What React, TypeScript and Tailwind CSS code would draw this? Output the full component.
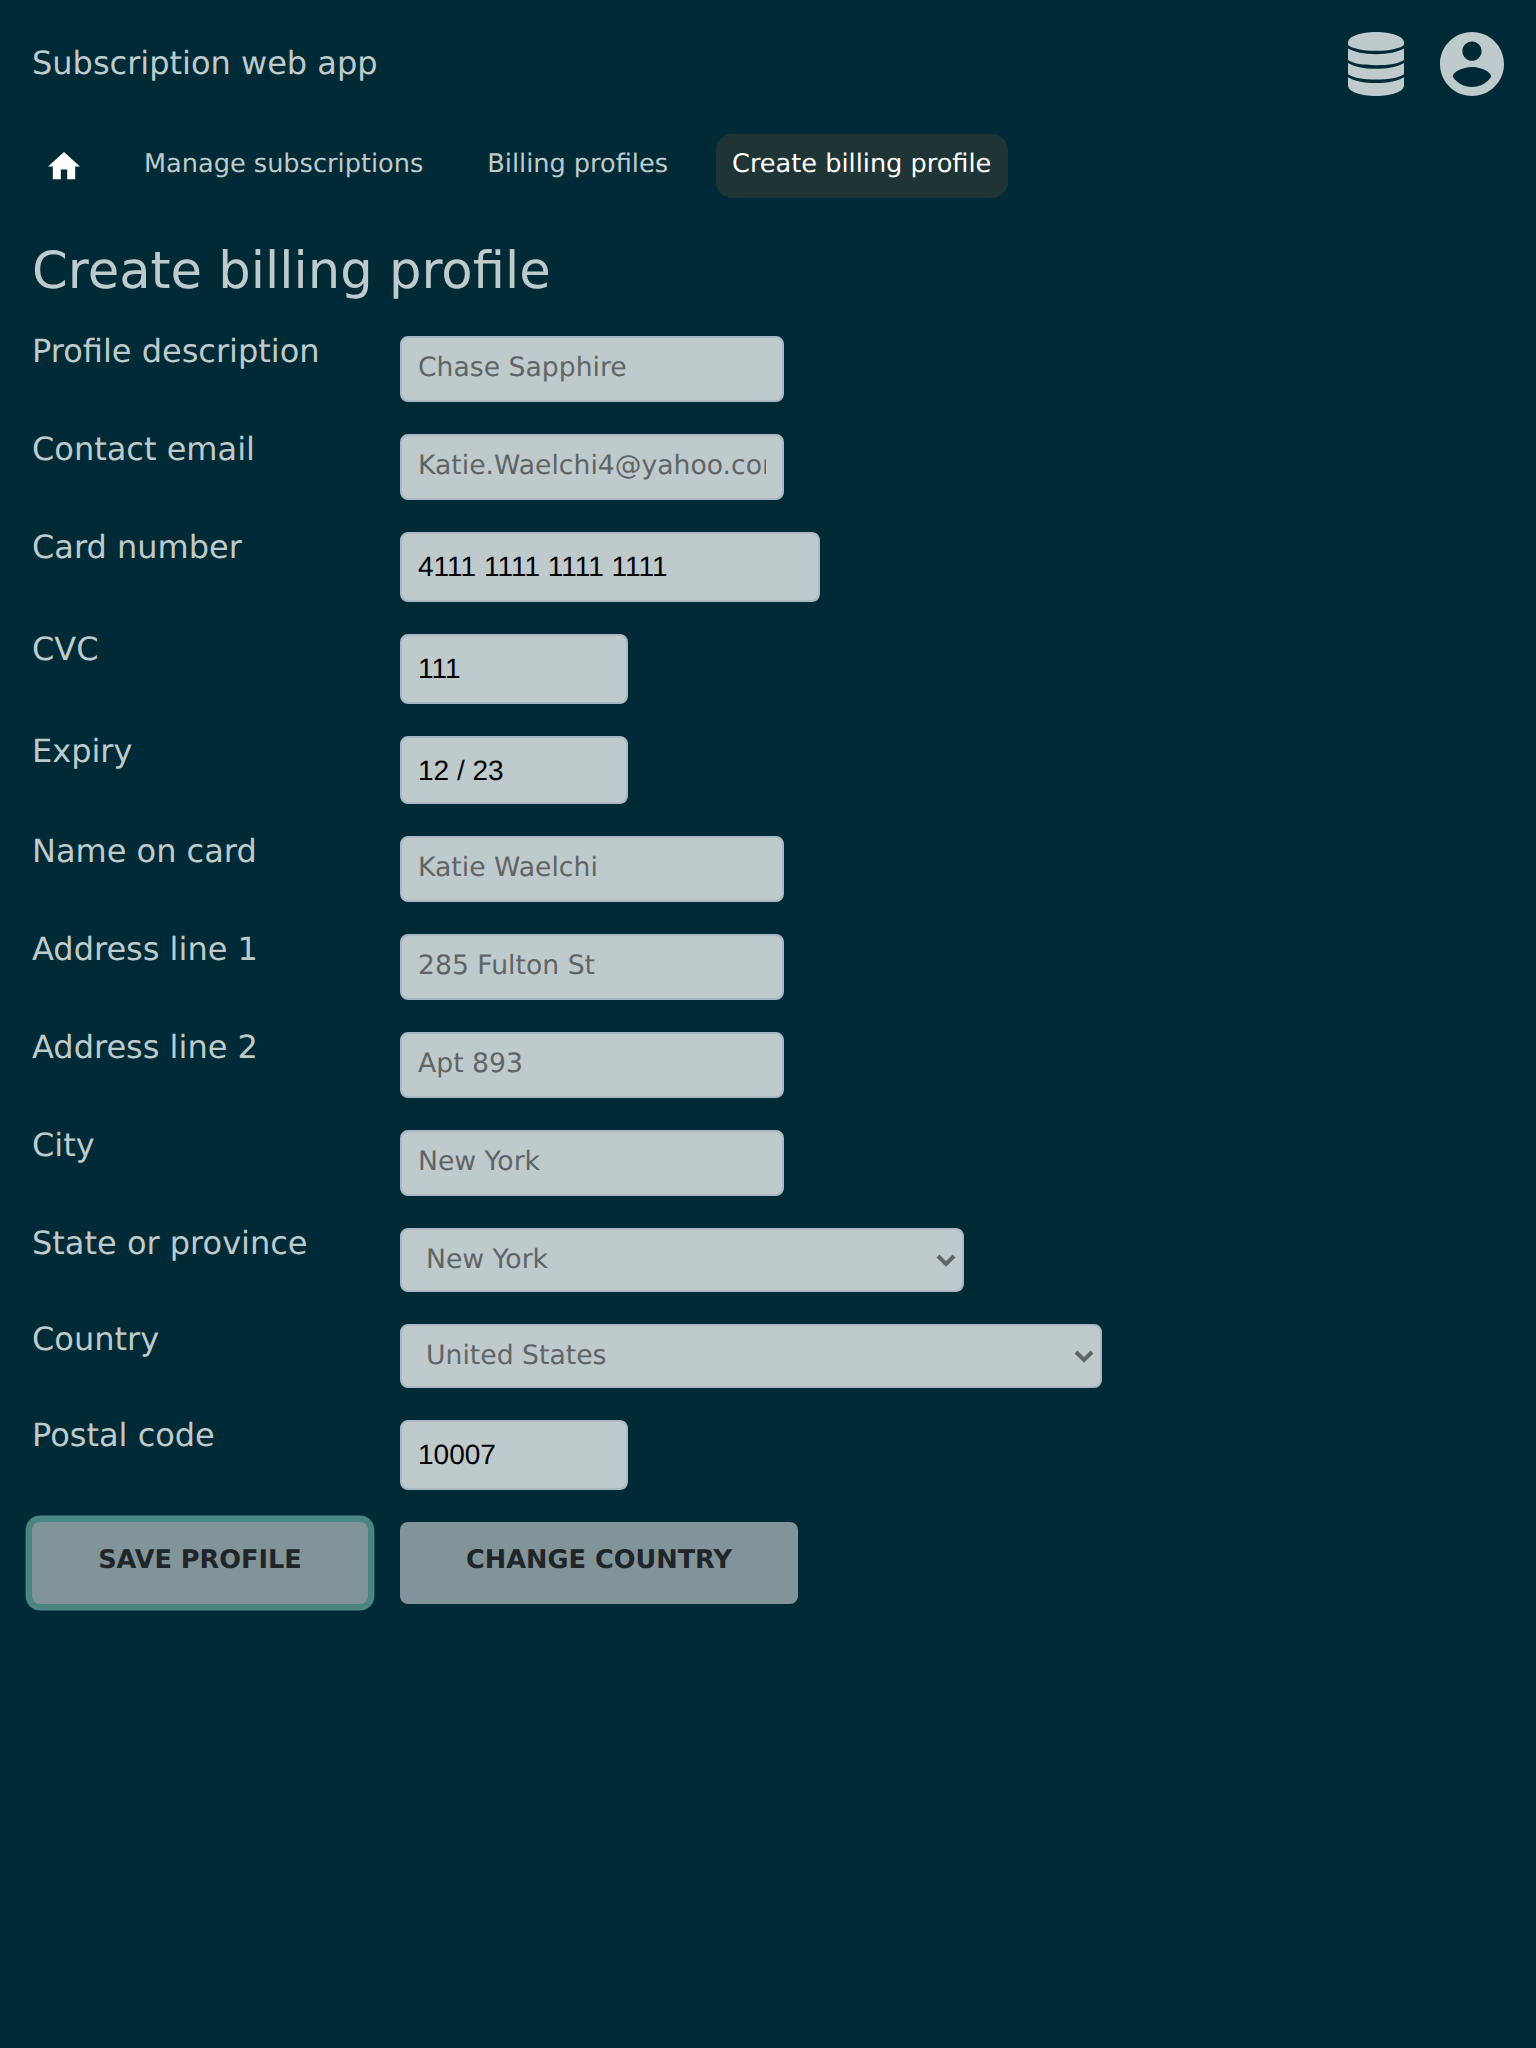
type Field = {
  label: string;
  value: string;
  kind: "placeholder" | "value" | "select";
  size: string;
};

const fields: Field[] = [
  { label: "Profile description", value: "Chase Sapphire", kind: "placeholder", size: "h-[66px] w-96" },
  { label: "Contact email", value: "Katie.Waelchi4@yahoo.com", kind: "placeholder", size: "h-[66px] w-96" },
  { label: "Card number", value: "4111 1111 1111 1111", kind: "value", size: "h-[70px] w-[420px] pt-[17px] pb-[17px]" },
  { label: "CVC", value: "111", kind: "value", size: "h-[70px] w-[228px] pt-[17px] pb-[17px]" },
  { label: "Expiry", value: "12 / 23", kind: "value", size: "h-[68px] w-[228px] pt-[17px] pb-[15px]" },
  { label: "Name on card", value: "Katie Waelchi", kind: "placeholder", size: "h-[66px] w-96" },
  { label: "Address line 1", value: "285 Fulton St", kind: "placeholder", size: "h-[66px] w-96" },
  { label: "Address line 2", value: "Apt 893", kind: "placeholder", size: "h-[66px] w-96" },
  { label: "City", value: "New York", kind: "placeholder", size: "h-[66px] w-96" },
  { label: "State or province", value: "New York", kind: "select", size: "h-16 w-[564px]" },
  { label: "Country", value: "United States", kind: "select", size: "h-16 w-[702px]" },
  { label: "Postal code", value: "10007", kind: "value", size: "h-[70px] w-[228px] pt-[17px] pb-[17px]" },
];

const box = "block rounded-lg border-2 border-[#a9b6c4] bg-[#bfcacc] [text-rendering:geometricPrecision]";

function Control({ field }: { field: Field }) {
  if (field.kind === "select") {
    return (
      <div className={`${box} ${field.size} flex items-start justify-between pt-[14px] pr-[6px] pl-6 text-[26.67px] leading-[31px] text-[#5f6566]`}>
        <span>{field.value}</span>
        <svg viewBox="0 0 20 13" className="mt-[10px] h-[13px] w-5" fill="none" stroke="currentColor" strokeWidth="4">
          <path d="M2 2l8 8 8-8" />
        </svg>
      </div>
    );
  }
  if (field.kind === "placeholder") {
    return (
      <input
        placeholder={field.value}
        className={`${box} ${field.size} px-4 pt-[14px] pb-[17px] text-[26.67px] leading-[31px] placeholder:text-[#5f6566]`}
      />
    );
  }
  return (
    <input
      readOnly
      defaultValue={field.value}
      className={`${box} ${field.size} px-4 font-['Liberation_Sans',sans-serif] text-[28px] leading-8 text-black`}
    />
  );
}

export default function App() {
  return (
    <div className="min-h-[2048px] bg-[#002b36] px-8 pt-8 font-['DejaVu_Sans',sans-serif] text-[#bfcacc] [text-rendering:geometricPrecision]">
      <header className="flex h-16 items-start justify-between">
        <span className="pt-[11px] text-[32px] leading-10">Subscription web app</span>
        <div className="flex gap-9">
          <svg viewBox="0 0 56 64" className="h-16 w-14" fill="currentColor">
            <path d="M28 0C43 0 56 4.200 56 10.700V13C52 16.500 41 18.800 28 18.800S4 16.500 0 13V10.700C0 4.200 13 0 28 0z" />
            <path d="M0 16.500C6 20 16 22.200 28 22.200S50 20 56 16.500V28C51 31.500 41 33.200 28 33.200S5 31.500 0 28z" />
            <path d="M0 30.900C6 34.600 16 36.700 28 36.700S50 34.600 56 30.900V42.300C51 45.800 41 47.600 28 47.600S5 45.800 0 42.300z" />
            <path d="M0 45.200C6 48.900 16 51 28 51S50 48.900 56 45.200V53.500C56 59.800 43 64 28 64S0 59.800 0 53.500z" />
          </svg>
          <svg viewBox="2 2 20 20" className="size-16" fill="currentColor">
            <path d="M12 2C6.48 2 2 6.48 2 12s4.48 10 10 10 10-4.48 10-10S17.52 2 12 2zm0 3c1.66 0 3 1.34 3 3s-1.34 3-3 3-3-1.34-3-3 1.34-3 3-3zm0 14.2c-2.5 0-4.71-1.28-6-3.22.03-1.99 4-3.08 6-3.08 1.99 0 5.97 1.09 6 3.08-1.29 1.94-3.5 3.22-6 3.22z" />
          </svg>
        </div>
      </header>

      <nav className="mt-[38px] flex h-16 gap-8 text-[25.6px] leading-[30px]">
        <a className="px-4 pt-[18.4px] text-white">
          <svg viewBox="2 3 20 17" className="h-[27.2px] w-8" fill="currentColor">
            <path d="M10 20v-6h4v6h5v-8h3L12 3 2 12h3v8z" />
          </svg>
        </a>
        <a className="px-4 pt-[15px]">Manage subscriptions</a>
        <a className="px-4 pt-[15px]">Billing profiles</a>
        <a className="w-[292px] rounded-2xl bg-[#1f3435] px-4 pt-[15px] text-white">Create billing profile</a>
      </nav>

      <main className="pt-[43px]">
        <h1 className="text-[51.2px] leading-[60px]">Create billing profile</h1>
        <form className="mt-[35px] flex flex-col gap-8">
          {fields.map((field) => (
            <div key={field.label} className="flex items-start">
              <label className="w-[368px] text-[32px] leading-[30px]">{field.label}</label>
              <Control field={field} />
            </div>
          ))}
          <div className="flex gap-8 text-[25.6px] leading-[30px] font-bold text-[#1f2528]">
            <button type="button" className="flex h-[82px] w-[336px] justify-center rounded-lg bg-[#81949a] pt-[23px] shadow-[0_0_0_6.4px_#4a8583] [text-rendering:geometricPrecision]">
              SAVE PROFILE
            </button>
            <button type="button" className="flex h-[82px] w-[398px] justify-center rounded-lg bg-[#81949a] pt-[23px] [text-rendering:geometricPrecision]">
              CHANGE COUNTRY
            </button>
          </div>
        </form>
      </main>
    </div>
  );
}
